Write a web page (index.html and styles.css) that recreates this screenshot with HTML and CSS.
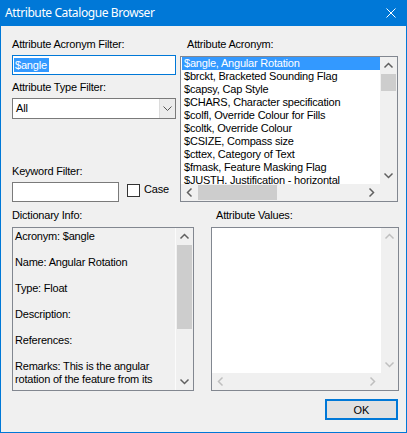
FILE: index.html
```html
<!DOCTYPE html>
<html>
<head>
<meta charset="utf-8">
<link rel="stylesheet" href="styles.css">
</head>
<body>
<div class="window">
  <div class="titlebar">
    <span class="title">Attribute Catalogue Browser</span>
    <svg class="close" width="10" height="10" viewBox="0 0 10 10"><path d="M0.5 0.5 L9.5 9.5 M9.5 0.5 L0.5 9.5" stroke="#fff" stroke-width="1" fill="none"/></svg>
  </div>
  <div class="client">
    <div class="top">
      <div class="leftcol">
        <span class="lbl">Attribute Acronym Filter:</span>
        <div class="textbox focused"><span class="sel">$angle</span></div>
        <span class="lbl lbl-type">Attribute Type Filter:</span>
        <div class="combo">
          <span class="combo-text">All</span>
          <span class="combo-btn"><svg width="9" height="5" viewBox="0 0 9 5"><path d="M0.5 0.5 L4.5 4.5 L8.5 0.5" stroke="#555" stroke-width="1" fill="none"/></svg></span>
        </div>
        <div class="keyword">
          <span class="lbl">Keyword Filter:</span>
          <div class="kwrow">
            <div class="textbox kw"></div>
            <span class="check"></span>
            <span class="case">Case</span>
          </div>
        </div>
      </div>
      <div class="rightcol">
        <span class="lbl indent7">Attribute Acronym:</span>
        <div class="listbox">
          <div class="items">
            <div class="item selected">$angle, Angular Rotation</div>
            <div class="item">$brckt, Bracketed Sounding Flag</div>
            <div class="item">$capsy, Cap Style</div>
            <div class="item">$CHARS, Character specification</div>
            <div class="item">$colfl, Override Colour for Fills</div>
            <div class="item">$coltk, Override Colour</div>
            <div class="item">$CSIZE, Compass size</div>
            <div class="item">$cttex, Category of Text</div>
            <div class="item">$fmask, Feature Masking Flag</div>
            <div class="item">$JUSTH, Justification - horizontal</div>
          </div>
          <div class="vscroll">
            <svg class="arr" width="17" height="17" viewBox="0 0 17 17"><path d="M4.5 10.5 L8.5 6.5 L12.5 10.5" stroke="#606060" stroke-width="1.5" fill="none"/></svg>
            <div class="vthumb list-vthumb"></div>
            <div class="spacer"></div>
            <svg class="arr" width="17" height="17" viewBox="0 0 17 17"><path d="M4.5 6.5 L8.5 10.5 L12.5 6.5" stroke="#606060" stroke-width="1.5" fill="none"/></svg>
          </div>
          <div class="hscroll">
            <svg class="arr" width="17" height="17" viewBox="0 0 17 17"><path d="M10.5 4.5 L6.5 8.5 L10.5 12.5" stroke="#606060" stroke-width="1.5" fill="none"/></svg>
            <div class="hthumb"></div>
            <div class="spacer"></div>
            <svg class="arr" width="17" height="17" viewBox="0 0 17 17"><path d="M6.5 4.5 L10.5 8.5 L6.5 12.5" stroke="#606060" stroke-width="1.5" fill="none"/></svg>
          </div>
          <div class="corner"></div>
        </div>
      </div>
    </div>

    <div class="mid">
      <div class="dictcol">
        <span class="lbl">Dictionary Info:</span>
        <div class="dictbox">
          <div class="dicttext">
            <p>Acronym: $angle</p>
            <p>Name: Angular Rotation</p>
            <p>Type: Float</p>
            <p>Description:</p>
            <p>References:</p>
            <p>Remarks: This is the angular<br>rotation of the feature from its</p>
          </div>
          <div class="vscroll dictscroll">
            <svg class="arr" width="17" height="17" viewBox="0 0 17 17"><path d="M4.5 10.5 L8.5 6.5 L12.5 10.5" stroke="#606060" stroke-width="1.5" fill="none"/></svg>
            <div class="vthumb dict-vthumb"></div>
            <div class="spacer"></div>
            <svg class="arr" width="17" height="17" viewBox="0 0 17 17"><path d="M4.5 6.5 L8.5 10.5 L12.5 6.5" stroke="#606060" stroke-width="1.5" fill="none"/></svg>
          </div>
        </div>
      </div>
      <div class="valcol">
        <span class="lbl indent5">Attribute Values:</span>
        <div class="valbox">
          <div class="valcontent"></div>
          <div class="vscroll">
            <svg class="arr" width="17" height="17" viewBox="0 0 17 17"><path d="M4.5 10.5 L8.5 6.5 L12.5 10.5" stroke="#bfbfbf" stroke-width="1.5" fill="none"/></svg>
            <div class="spacer"></div>
            <svg class="arr" width="17" height="17" viewBox="0 0 17 17"><path d="M4.5 6.5 L8.5 10.5 L12.5 6.5" stroke="#bfbfbf" stroke-width="1.5" fill="none"/></svg>
          </div>
          <div class="hscroll">
            <svg class="arr" width="17" height="17" viewBox="0 0 17 17"><path d="M10.5 4.5 L6.5 8.5 L10.5 12.5" stroke="#bfbfbf" stroke-width="1.5" fill="none"/></svg>
            <div class="spacer"></div>
            <svg class="arr" width="17" height="17" viewBox="0 0 17 17"><path d="M6.5 4.5 L10.5 8.5 L6.5 12.5" stroke="#bfbfbf" stroke-width="1.5" fill="none"/></svg>
          </div>
          <div class="corner"></div>
        </div>
      </div>
    </div>

    <div class="footer">
      <button class="ok">OK</button>
    </div>
  </div>
</div>
</body>
</html>
```

FILE: styles.css
```css
* { box-sizing: border-box; }

body {
  margin: 0;
  font-family: "Liberation Sans", Arial, sans-serif;
  font-size: 11px;
  letter-spacing: -0.2px;
  color: #000;
}

.window {
  width: 407px;
  height: 433px;
  background: #0078d7;
  padding: 0 1px 1px 1px;
  display: flex;
  flex-direction: column;
}

.titlebar {
  height: 26px;
  flex: none;
  display: flex;
  align-items: center;
  margin: 0 -1px;
  padding-left: 5px;
  color: #fff;
}

.title {
  font-family: "Noto Sans", sans-serif;
  font-size: 12px;
  line-height: 26px;
  letter-spacing: -0.4px;
}

.close {
  margin-left: auto;
  margin-right: 11px;
  display: block;
}

.client {
  flex: 1;
  background: #f0f0f0;
  padding: 12px 8px 0 11px;
  display: flex;
  flex-direction: column;
}

.lbl {
  display: block;
  height: 13px;
  line-height: 13px;
  white-space: nowrap;
}

.indent7 { padding-left: 7px; }
.indent5 { padding-left: 5px; }

.top {
  display: grid;
  grid-template-columns: 164px 218px;
  column-gap: 4px;
}

.leftcol {
  display: flex;
  flex-direction: column;
}

.textbox {
  height: 20px;
  border: 1px solid #7a7a7a;
  background: #fff;
  display: flex;
  align-items: center;
}

.textbox.focused {
  border-color: #0078d7;
  margin-top: 4px;
}

.sel {
  background: #3399ff;
  color: #fff;
  line-height: 14px;
  margin-left: 1px;
  padding: 0 2px 0 1px;
}

.lbl-type { margin-top: 6px; }

.combo {
  margin-top: 4px;
  height: 21px;
  border: 1px solid #7a7a7a;
  background: #fff;
  display: flex;
}

.combo-text {
  flex: 1;
  padding-left: 3px;
  line-height: 19px;
}

.combo-btn {
  width: 16px;
  background: #ececec;
  border-left: 1px solid #dcdcdc;
  display: flex;
  align-items: center;
  justify-content: center;
}

.combo-btn svg { display: block; }

.keyword { margin-top: auto; }

.kwrow {
  display: flex;
  align-items: flex-start;
  margin-top: 4px;
}

.kw { width: 107px; }

.check {
  width: 13px;
  height: 13px;
  border: 1px solid #333;
  background: #fff;
  margin: 2px 0 0 8px;
}

.case {
  margin: 1px 0 0 4px;
  line-height: 13px;
}

.listbox {
  margin-top: 5px;
  height: 146px;
  border: 1px solid #828790;
  background: #fff;
  display: grid;
  grid-template-columns: 1fr 17px;
  grid-template-rows: 1fr 17px;
  overflow: hidden;
}

.items {
  overflow: hidden;
  min-height: 0;
}

.item {
  height: 13px;
  line-height: 13px;
  margin-left: 1px;
  padding-left: 2px;
  white-space: nowrap;
}

.item.selected {
  background: #3399ff;
  color: #fff;
}

.vscroll {
  background: #f0f0f0;
  display: flex;
  flex-direction: column;
  min-height: 0;
}

.hscroll {
  background: #f0f0f0;
  display: flex;
}

.arr { display: block; flex: none; }

.spacer { flex: 1; }

.vthumb {
  margin: 0 1px;
  background: #cdcdcd;
  flex: none;
}

.list-vthumb { height: 17px; }
.dict-vthumb { height: 84px; }

.hthumb {
  width: 79px;
  margin: 1px 0;
  background: #cdcdcd;
  flex: none;
}

.corner { background: #f0f0f0; }

.mid {
  display: grid;
  grid-template-columns: 182px 188px;
  column-gap: 17px;
  margin-top: 7px;
}

.dictbox {
  margin-top: 5px;
  height: 164px;
  border: 1px solid #828790;
  background: #f0f0f0;
  display: flex;
}

.dicttext {
  flex: 1;
  padding: 2px 0 0 2px;
  overflow: hidden;
  border-right: 1px solid #fbfbfb;
}

.dicttext p {
  margin: 0 0 13px;
  line-height: 13px;
  white-space: nowrap;
}

.dictscroll { width: 17px; flex: none; }

.valbox {
  margin-top: 5px;
  height: 164px;
  border: 1px solid #828790;
  background: #fff;
  display: grid;
  grid-template-columns: 1fr 17px;
  grid-template-rows: 1fr 17px;
}

.footer {
  display: flex;
  justify-content: flex-end;
  margin-top: 8px;
}

.ok {
  width: 73px;
  height: 21px;
  border: 2px solid #0078d7;
  background: #e1e1e1;
  font-family: "Liberation Sans", Arial, sans-serif;
  font-size: 11px;
  letter-spacing: 0;
  color: #000;
  padding: 0;
}
```
